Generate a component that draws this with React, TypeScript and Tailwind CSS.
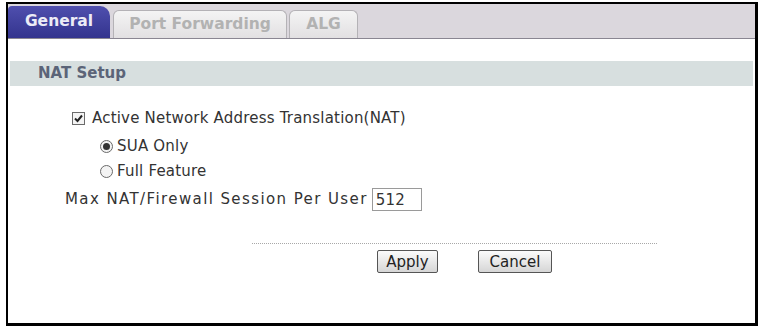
import React from 'react';

const font = { fontFamily: '"DejaVu Sans", Verdana, sans-serif' };

function CheckBox() {
  return (
    <span className="inline-flex h-[13px] w-[13px] shrink-0 items-center justify-center border border-[#6b6b6b] bg-[#f4f4f4]">
      <svg width="11" height="11" viewBox="0 0 11 11">
        <path d="M2 5.5 L4.5 8 L9 2.5" fill="none" stroke="#222" strokeWidth="2" />
      </svg>
    </span>
  );
}

function Radio({ checked }: { checked?: boolean }) {
  return (
    <span className="inline-flex h-[13px] w-[13px] shrink-0 items-center justify-center rounded-full border border-[#6a6a6a] bg-[#f3f3f3]">
      {checked && <span className="h-[7px] w-[7px] rounded-full bg-[#333]" />}
    </span>
  );
}

export default function App() {
  return (
    <div className="h-[328px] w-[762px] bg-white pl-[6px] pt-[2px]" style={font}>
      <div className="flex h-[324px] w-[752px] flex-col border-b-[3px] border-l-2 border-r-[3px] border-t-2 border-black bg-white">
        {/* TABS */}
        <div className="flex h-[35px] items-end border-b border-[#8a8692] bg-[#dbd7dd]">
          <div className="flex h-[32px] w-[102px] items-center justify-center rounded-tl-[4px] rounded-tr-[10px] bg-gradient-to-b from-[#4f4fae] to-[#34348e] text-[15.5px] font-bold text-[#ececf6]">
            General
          </div>
          <div className="ml-[3px] flex h-[28px] w-[174px] items-center justify-center rounded-t-[6px] border border-b-0 border-[#b4b2b6] bg-gradient-to-b from-[#f4f4f4] to-[#e2e0e2] text-[15.5px] font-bold text-[#b2b2b2]">
            Port Forwarding
          </div>
          <div className="ml-[2px] flex h-[28px] w-[69px] items-center justify-center rounded-t-[6px] border border-b-0 border-[#b4b2b6] bg-gradient-to-b from-[#f4f4f4] to-[#e2e0e2] text-[15.5px] font-bold text-[#b2b2b2]">
            ALG
          </div>
        </div>

        {/* NAT SETUP */}
        <div className="mx-[2px] mt-[22px] flex h-[25px] items-center bg-[#d7dfdf] pl-[28px] text-[15px] font-bold text-[#5b6478]">
          NAT Setup
        </div>

        <div className="flex flex-col text-[15px] tracking-[0.2px] text-[#333]">
          <div className="ml-[64px] mt-[24px] flex h-[16px] items-center gap-[7px]">
            <CheckBox />
            <span>Active Network Address Translation(NAT)</span>
          </div>
          <div className="ml-[92px] mt-[12px] flex h-[16px] items-center gap-[4px]">
            <Radio checked />
            <span>SUA Only</span>
          </div>
          <div className="ml-[92px] mt-[9px] flex h-[16px] items-center gap-[4px]">
            <Radio />
            <span>Full Feature</span>
          </div>
          <div className="ml-[57px] mt-[9px] flex items-center gap-[4px]">
            <span className="tracking-[1.4px]">Max NAT/Firewall Session Per User</span>
            <input
              defaultValue="512"
              className="h-[23px] w-[50px] border border-[#9a9a9a] bg-white px-[3px] text-[15px] text-[#333] outline-none"
              style={font}
            />
          </div>
        </div>

        {/* BUTTONS */}
        <div className="ml-[244px] mt-[32px] w-[405px] border-t border-dotted border-[#a8a8a8]" />
        <div className="mt-[6px] flex gap-[40px] pl-[369px]">
          <button className="h-[23px] w-[61px] rounded-[2px] border border-[#555] bg-gradient-to-b from-[#fbfbfb] to-[#d6d6d6] text-[15px] text-[#222]">
            Apply
          </button>
          <button className="h-[23px] w-[74px] rounded-[2px] border border-[#555] bg-gradient-to-b from-[#fbfbfb] to-[#d6d6d6] text-[15px] text-[#222]">
            Cancel
          </button>
        </div>
      </div>
    </div>
  );
}
